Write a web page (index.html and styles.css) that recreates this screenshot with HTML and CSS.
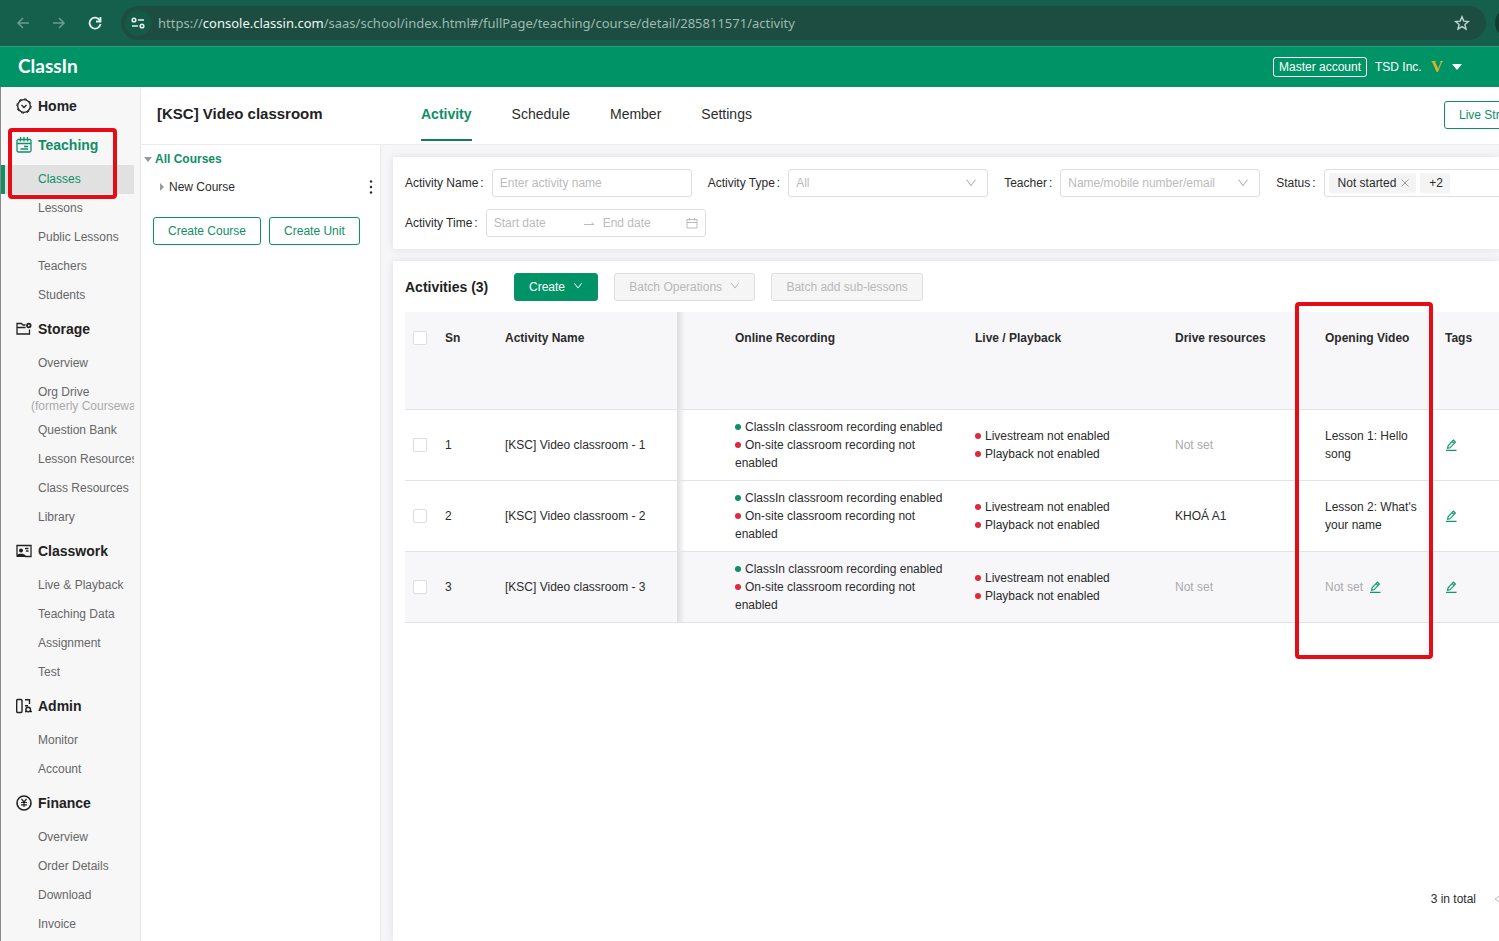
FILE: index.html
```html
<!DOCTYPE html>
<html lang="en">
<head>
    <meta charset="UTF-8">
    <title>ClassIn</title>
    <link rel="stylesheet" href="styles.css">
</head>
<body>
    <svg width="0" height="0" class="sprite" aria-hidden="true">
        <symbol id="edit" viewBox="0 0 12 12">
            <path d="M1 11.3h10.5M2.6 9.3l.5-2.5L8.4 1.2l2 1.9L5 8.8z M7.2 2.6l1.8 1.8" fill="none" stroke="currentColor" stroke-width="1.2"/>
        </symbol>
        <symbol id="down" viewBox="0 0 12 12">
            <path d="M1.5 2.5L6 8.5l4.5-6" fill="none" stroke="currentColor" stroke-width="1.2"/>
        </symbol>
    </svg>

    <div class="browser">
        <button class="nav-btn dim" aria-label="Back">
            <svg width="14" height="14" viewBox="0 0 14 14"><path d="M13 7H2M7 2L2 7l5 5" fill="none" stroke="currentColor" stroke-width="1.5"/></svg>
        </button>
        <button class="nav-btn dim" aria-label="Forward">
            <svg width="14" height="14" viewBox="0 0 14 14"><path d="M1 7h11M7 2l5 5-5 5" fill="none" stroke="currentColor" stroke-width="1.5"/></svg>
        </button>
        <button class="nav-btn" aria-label="Reload">
            <svg width="14" height="14" viewBox="0 0 14 14"><path d="M11.8 4.2A5.5 5.5 0 1 0 12.5 8M12.500 1v4.500H8" fill="none" stroke="currentColor" stroke-width="1.8"/></svg>
        </button>
        <div class="url-bar">
            <span class="site-info">
                <svg width="14" height="12" viewBox="0 0 14 12"><g fill="none" stroke="currentColor" stroke-width="1.6"><circle cx="3" cy="3" r="1.8"/><path d="M7 3h6M1 9h6"/><circle cx="11" cy="9" r="1.8"/></g></svg>
            </span>
            <span class="url">https://<b>console.classin.com</b>/saas/school/index.html#/fullPage/teaching/course/detail/285811571/activity</span>
            <svg class="star" width="16" height="16" viewBox="0 0 16 16"><path d="M8 1.8l1.8 4.3 4.6.4-3.5 3 1.1 4.6L8 11.6l-4 2.5 1.1-4.600-3.500-3 4.600-.4z" fill="none" stroke="currentColor" stroke-width="1.4"/></svg>
        </div>
        <span class="ext"></span>
    </div>

    <header class="app-header">
        <span class="logo">ClassIn</span>
        <span class="badge">Master account</span>
        <span class="org">TSD Inc.</span>
        <span class="vip">V</span>
        <span class="caret"></span>
    </header>

    <div class="layout">
        <nav class="sidebar">
            <h3>
                <svg width="16" height="16" viewBox="0 0 16 16"><g fill="none" stroke="currentColor"><circle cx="8" cy="8" r="6.3" stroke-width="1.3"/><circle cx="8" cy="8" r="7.2" stroke-dasharray="2.8 2.85"/><path d="M5.500 7L8 9.500 10.500 7" stroke-width="1.3"/></g></svg>
                Home
            </h3>

            <div class="group">
                <h3 class="active">
                    <svg width="16" height="16" viewBox="0 0 16 16"><g fill="none" stroke="currentColor" stroke-width="1.3"><rect x="1" y="2.500" width="14" height="12.500" rx="1.500"/><path d="M1 6.500h14M4.500 0v4.500M8 0v4.500M11.500 0v4.500M8 9.500h4M4.500 12h7.500"/></g></svg>
                    Teaching
                </h3>
                <a href="#" class="current">Classes</a>
                <a href="#">Lessons</a>
                <a href="#">Public Lessons</a>
                <a href="#">Teachers</a>
                <a href="#">Students</a>
                <div class="mark mark-menu"></div>
            </div>

            <h3>
                <svg width="16" height="16" viewBox="0 0 16 16"><g fill="none" stroke="currentColor" stroke-width="1.3"><path d="M9.500 4H7L5.500 2.500H1V13h12.500V8.500M1 6.500h8.500"/><circle cx="12.800" cy="4.500" r="1.800" stroke-width="1.800"/></g></svg>
                Storage
            </h3>
            <a href="#">Overview</a>
            <a href="#" class="two-line">Org Drive<small>(formerly Courseware)</small></a>
            <a href="#">Question Bank</a>
            <a href="#">Lesson Resources</a>
            <a href="#">Class Resources</a>
            <a href="#">Library</a>

            <h3>
                <svg width="16" height="16" viewBox="0 0 16 16"><path d="M1 12V2.500h14v11H9M9 5.500h3.500M10 8h2.500" fill="none" stroke="currentColor" stroke-width="1.3"/><circle cx="5" cy="7.500" r="2" fill="currentColor"/><path d="M.5 14v-1.500C1 10 9 10 9.500 12.500V14z" fill="currentColor"/></svg>
                Classwork
            </h3>
            <a href="#">Live &amp; Playback</a>
            <a href="#">Teaching Data</a>
            <a href="#">Assignment</a>
            <a href="#">Test</a>

            <h3>
                <svg width="16" height="16" viewBox="0 0 16 16"><g fill="none" stroke="currentColor" stroke-width="1.4"><rect x=".7" y="1.500" width="5.300" height="13" rx="1"/><path d="M9 1.700h4.500V6M9 7.700h3"/><circle cx="12.200" cy="11.500" r="2.300"/><path d="M9 13.500h1.500M14 13.500h2"/></g></svg>
                Admin
            </h3>
            <a href="#">Monitor</a>
            <a href="#">Account</a>

            <h3>
                <svg width="16" height="16" viewBox="0 0 16 16"><g fill="none" stroke="currentColor"><circle cx="8" cy="8" r="7" stroke-width="1.6"/><path d="M5.500 4L8 7l2.500-3M8 7v5M5 7.500h6M5 9.800h6" stroke-width="1.2"/></g></svg>
                Finance
            </h3>
            <a href="#">Overview</a>
            <a href="#">Order Details</a>
            <a href="#">Download</a>
            <a href="#">Invoice</a>
        </nav>

        <div class="page">
            <div class="page-head">
                <h1>[KSC] Video classroom</h1>
                <div class="tabs">
                    <a href="#" class="on">Activity</a>
                    <a href="#">Schedule</a>
                    <a href="#">Member</a>
                    <a href="#">Settings</a>
                </div>
                <button class="btn live-btn">Live Stream</button>
            </div>

            <div class="columns">
                <aside class="tree">
                    <div class="tree-root"><span class="tri-down"></span>All Courses</div>
                    <div class="tree-item">
                        <span class="tri-right"></span>New Course
                        <svg class="dots" width="4" height="14" viewBox="0 0 4 14"><g fill="currentColor"><circle cx="2" cy="1.500" r="1.200"/><circle cx="2" cy="7" r="1.200"/><circle cx="2" cy="12.500" r="1.200"/></g></svg>
                    </div>
                    <div class="tree-btns">
                        <button class="btn">Create Course</button>
                        <button class="btn">Create Unit</button>
                    </div>
                </aside>

                <main class="content">
                    <section class="card filters">
                        <div class="filter-row">
                            <div class="field">
                                <label for="activityName">Activity Name<i>:</i></label>
                                <input type="text" id="activityName" placeholder="Enter activity name">
                            </div>
                            <div class="field">
                                <label for="activityType">Activity Type<i>:</i></label>
                                <div class="select">
                                    <select id="activityType"><option>All</option></select>
                                    <svg width="12" height="12"><use href="#down"/></svg>
                                </div>
                            </div>
                            <div class="field">
                                <label for="teacher">Teacher<i>:</i></label>
                                <div class="select">
                                    <select id="teacher"><option>Name/mobile number/email</option></select>
                                    <svg width="12" height="12"><use href="#down"/></svg>
                                </div>
                            </div>
                            <div class="field">
                                <span class="label">Status<i>:</i></span>
                                <div class="tag-box">
                                    <span class="tag">Not started<button aria-label="Remove"><svg width="8" height="8" viewBox="0 0 8 8"><path d="M.5.5l7 7M7.500.5l-7 7" stroke="currentColor"/></svg></button></span>
                                    <span class="tag">+2</span>
                                </div>
                            </div>
                        </div>
                        <div class="filter-row">
                            <div class="field">
                                <label for="startDate">Activity Time<i>:</i></label>
                                <div class="range">
                                    <input type="text" id="startDate" class="start" placeholder="Start date">
                                    <svg width="11" height="12" viewBox="0 0 11 12"><path d="M0 7.500h10L7.500 5" fill="none" stroke="currentColor"/></svg>
                                    <input type="text" id="endDate" placeholder="End date" aria-label="End date">
                                    <svg width="12" height="12" viewBox="0 0 12 12"><path d="M1 2.500h10v8.500H1zM1 5.500h10M3.500 1v2.500M8.500 1v2.500" fill="none" stroke="currentColor"/></svg>
                                </div>
                            </div>
                        </div>
                    </section>

                    <section class="card list">
                        <div class="toolbar">
                            <h2>Activities (3)</h2>
                            <button class="btn primary">Create <svg width="10" height="10"><use href="#down"/></svg></button>
                            <button class="btn" disabled>Batch Operations <svg width="10" height="10"><use href="#down"/></svg></button>
                            <button class="btn" disabled>Batch add sub-lessons</button>
                        </div>

                        <table>
                            <colgroup>
                                <col class="c-check">
                                <col class="c-sn">
                                <col class="c-name">
                                <col class="c-rec">
                                <col class="c-live">
                                <col class="c-drive">
                                <col class="c-video">
                                <col class="c-tags">
                            </colgroup>
                            <thead>
                                <tr>
                                    <th><input type="checkbox" aria-label="Select all"></th>
                                    <th>Sn</th>
                                    <th>Activity Name</th>
                                    <th class="rec">Online Recording</th>
                                    <th>Live / Playback</th>
                                    <th>Drive resources</th>
                                    <th class="video">Opening Video<div class="mark mark-col"></div></th>
                                    <th>Tags</th>
                                </tr>
                            </thead>
                            <tbody>
                                <tr>
                                    <td><input type="checkbox" aria-label="Select 1"></td>
                                    <td>1</td>
                                    <td>[KSC] Video classroom - 1</td>
                                    <td class="rec"><span class="dot green"></span>ClassIn classroom recording enabled<br><span class="dot"></span>On-site classroom recording not enabled</td>
                                    <td><span class="dot"></span>Livestream not enabled<br><span class="dot"></span>Playback not enabled</td>
                                    <td><span class="muted">Not set</span></td>
                                    <td>Lesson 1: Hello song</td>
                                    <td><button class="edit" aria-label="Edit tags"><svg width="12" height="12"><use href="#edit"/></svg></button></td>
                                </tr>
                                <tr>
                                    <td><input type="checkbox" aria-label="Select 2"></td>
                                    <td>2</td>
                                    <td>[KSC] Video classroom - 2</td>
                                    <td class="rec"><span class="dot green"></span>ClassIn classroom recording enabled<br><span class="dot"></span>On-site classroom recording not enabled</td>
                                    <td><span class="dot"></span>Livestream not enabled<br><span class="dot"></span>Playback not enabled</td>
                                    <td>KHOÁ A1</td>
                                    <td>Lesson 2: What's your name</td>
                                    <td><button class="edit" aria-label="Edit tags"><svg width="12" height="12"><use href="#edit"/></svg></button></td>
                                </tr>
                                <tr class="hover">
                                    <td><input type="checkbox" aria-label="Select 3"></td>
                                    <td>3</td>
                                    <td>[KSC] Video classroom - 3</td>
                                    <td class="rec"><span class="dot green"></span>ClassIn classroom recording enabled<br><span class="dot"></span>On-site classroom recording not enabled</td>
                                    <td><span class="dot"></span>Livestream not enabled<br><span class="dot"></span>Playback not enabled</td>
                                    <td><span class="muted">Not set</span></td>
                                    <td><span class="muted">Not set</span> <button class="edit" aria-label="Edit opening video"><svg width="12" height="12"><use href="#edit"/></svg></button></td>
                                    <td><button class="edit" aria-label="Edit tags"><svg width="12" height="12"><use href="#edit"/></svg></button></td>
                                </tr>
                            </tbody>
                        </table>

                        <div class="pager">
                            <span>3 in total</span>
                            <button aria-label="Previous page"><svg width="8" height="10" viewBox="0 0 8 10"><path d="M7 1L1 5l6 4" fill="none" stroke="currentColor"/></svg></button>
                        </div>
                    </section>
                </main>
            </div>
        </div>
    </div>
</body>
</html>
```
FILE: styles.css
```css
* {
    box-sizing: border-box;
}
body {
    margin: 0;
    height: 100vh;
    display: flex;
    flex-direction: column;
    overflow: hidden;
    font-family: "Liberation Sans", Arial, sans-serif;
    font-size: 12px;
    line-height: 18px;
    color: #2b2b2b;
    background-color: #fff;
}
h1, h2, h3 {
    margin: 0;
}
a {
    color: inherit;
    text-decoration: none;
}
button, input, select {
    font: inherit;
    color: inherit;
}
button {
    padding: 0;
    border: none;
    background: none;
    cursor: pointer;
}
i {
    font-style: normal;
    margin-left: 2px;
}
.sprite {
    position: absolute;
}

/* browser bar */
.browser {
    flex: none;
    display: flex;
    align-items: center;
    height: 46px;
    padding-left: 16px;
    background-color: #15604d;
    color: #e3f1ec;
    overflow: hidden;
}
.nav-btn {
    display: flex;
    margin-right: 22px;
}
.nav-btn.dim {
    color: #6a9c8e;
}
.url-bar {
    flex: 1;
    display: flex;
    align-items: center;
    height: 34px;
    margin-right: 9px;
    padding: 0 16px 0 4px;
    border-radius: 17px;
    background-color: #1c4d40;
}
.nav-btn + .url-bar {
    margin-left: -3px;
}
.site-info {
    display: flex;
    align-items: center;
    justify-content: center;
    width: 26px;
    height: 26px;
    margin-right: 7px;
    border-radius: 50%;
    background-color: #175947;
}
.url {
    flex: 1;
    font-family: "Noto Sans", sans-serif;
    font-size: 13px;
    color: #9dbab1;
    white-space: nowrap;
}
.url b {
    font-weight: normal;
    color: #eef8f5;
}
.star {
    color: #c3d6d0;
}
.ext {
    flex: none;
    width: 30px;
    height: 30px;
    margin-right: -26px;
    border-radius: 50%;
    background-color: #123d32;
}

/* green header */
.app-header {
    flex: none;
    display: flex;
    align-items: center;
    height: 41px;
    padding: 0 37px 0 18px;
    border-top: 1px solid #3a9a7c;
    background-color: #009366;
    color: #fff;
}
.logo {
    flex: 1;
    padding-bottom: 2px;
    font-family: Lato, sans-serif;
    font-size: 19px;
    font-weight: bold;
}
.badge {
    margin-right: 8px;
    padding: 0 5px;
    border: 1px solid #fff;
    border-radius: 3px;
}
.org {
    margin-right: 9px;
}
.vip {
    margin-right: 9px;
    font-family: "Liberation Serif", serif;
    font-size: 17px;
    font-weight: bold;
    color: #d9b429;
}
.caret {
    border: 5px solid transparent;
    border-top: 6px solid #fff;
    border-bottom: none;
}

.layout {
    flex: 1;
    display: flex;
    min-height: 0;
}

/* left menu */
.sidebar {
    flex: none;
    width: 141px;
    border-left: 1px solid #8a8a8a;
    border-right: 1px solid #e6e6e6;
    background-color: #f7f7f8;
    color: #666;
}
.sidebar h3 {
    display: flex;
    align-items: center;
    gap: 6px;
    height: 39px;
    padding: 0 0 2px 15px;
    font-size: 14px;
    color: #222;
}
.sidebar h3.active {
    color: #0f8f66;
}
.sidebar a {
    display: block;
    height: 29px;
    margin-right: 6px;
    padding-left: 37px;
    line-height: 29px;
    white-space: nowrap;
    overflow: hidden;
}
.sidebar a.current {
    padding-left: 33px;
    border-left: 4px solid #0f8f66;
    background-color: #e1e1e1;
    color: #0f8f66;
}
.sidebar a.two-line {
    height: 38px;
    padding-top: 7px;
    line-height: 14px;
}
.two-line small {
    display: block;
    margin-left: -7px;
    font-size: 12px;
    color: #aaa;
}
.group {
    position: relative;
}

/* red highlight frames */
.mark {
    position: absolute;
    z-index: 2;
    border: 4px solid #e60c16;
    border-radius: 4px;
    pointer-events: none;
}
.mark-menu {
    top: 2px;
    left: 7px;
    width: 109px;
    height: 71px;
}
.mark-col {
    top: -10px;
    left: -22px;
    width: 138px;
    height: 357px;
}

/* page */
.page {
    flex: 1;
    display: flex;
    flex-direction: column;
    min-width: 0;
}
.page-head {
    flex: none;
    display: flex;
    height: 58px;
    padding-left: 16px;
    border-bottom: 1px solid #ebebef;
    overflow: hidden;
}
.page-head h1 {
    width: 264px;
    font-size: 15px;
    line-height: 54px;
    color: #222;
}
.tabs {
    display: flex;
    gap: 40px;
    font-size: 14px;
    line-height: 54px;
}
.tabs a {
    height: 54px;
}
.tabs .on {
    font-weight: bold;
    color: #0f8f66;
    border-bottom: 2px solid #0f7d5c;
}
.btn {
    height: 28px;
    padding: 0 14px;
    border: 1px solid #0f8f66;
    border-radius: 3px;
    color: #0f8f66;
    background-color: #fff;
    white-space: nowrap;
}
.btn svg {
    margin-left: 5px;
}
.btn.primary {
    color: #fff;
    background-color: #009366;
}
.btn:disabled {
    border-color: #dedede;
    color: #b8b8b8;
    background-color: #f5f5f5;
}
.live-btn {
    flex: none;
    width: 93px;
    margin: 14px -38px 0 auto;
}
.columns {
    flex: 1;
    display: flex;
    min-height: 0;
}

/* course tree */
.tree {
    flex: none;
    width: 240px;
    padding: 5px 7px 0 4px;
    border-right: 1px solid #ebebef;
}
.tree-root, .tree-item {
    display: flex;
    align-items: center;
}
.tree-root {
    gap: 3px;
    font-weight: bold;
    color: #0f8f66;
}
.tree-item {
    gap: 5px;
    margin-top: 10px;
    padding-left: 15px;
}
.tri-down {
    border: 4px solid transparent;
    border-top: 5px solid #999;
    border-bottom: none;
    margin-left: -1px;
}
.tri-right {
    border: 4px solid transparent;
    border-left: 4px solid #999;
    border-right: none;
}
.dots {
    margin-left: auto;
}
.tree-btns {
    display: flex;
    gap: 8px;
    margin-top: 21px;
    padding-left: 8px;
}

/* main area */
.content {
    flex: 1;
    display: flex;
    flex-direction: column;
    gap: 12px;
    min-width: 0;
    padding: 12px 0 0 12px;
    background-color: #f6f6f9;
    overflow: hidden;
}
.card {
    padding: 12px;
    background-color: #fff;
    box-shadow: 0 0 8px rgba(0, 0, 0, 0.1);
}
.filters {
    display: flex;
    flex-direction: column;
    gap: 12px;
}
.filter-row {
    display: flex;
    gap: 16px;
}
.field {
    flex: none;
    display: flex;
    align-items: center;
    gap: 8px;
}
.field input, .field select {
    width: 200px;
    height: 28px;
    padding: 0 7px;
    border: 1px solid #dedede;
    border-radius: 3px;
    background-color: #fff;
    outline: none;
}
.field select {
    appearance: none;
    color: #bbb;
}
input::placeholder {
    color: #bbb;
}
.select {
    position: relative;
}
.select svg {
    position: absolute;
    top: 8px;
    right: 11px;
    color: #bbb;
    pointer-events: none;
}
.tag-box {
    display: flex;
    align-items: center;
    gap: 4px;
    width: 200px;
    height: 28px;
    padding: 0 4px;
    border: 1px solid #dedede;
    border-radius: 3px;
}
.tag {
    display: flex;
    align-items: center;
    gap: 5px;
    height: 20px;
    padding: 0 7px 0 9px;
    border-radius: 2px;
    background-color: #f4f4f4;
}
.tag button {
    display: flex;
    color: #999;
}
.range {
    display: flex;
    align-items: center;
    width: 220px;
    height: 28px;
    padding: 0 7px;
    border: 1px solid #dedede;
    border-radius: 3px;
    color: #bbb;
}
.field .range input {
    flex: 1;
    width: 0;
    height: 24px;
    padding: 0;
    border: none;
}
.field .range .start {
    flex: none;
    width: 90px;
}
.range svg {
    flex: none;
    margin-right: 8px;
}
.range svg:last-child {
    margin-right: 0;
}

/* activity list */
.list {
    flex: 1;
    display: flex;
    flex-direction: column;
}
.toolbar {
    display: flex;
    align-items: center;
    gap: 16px;
    margin-bottom: 11px;
}
.toolbar h2 {
    width: 93px;
    font-size: 14px;
    color: #222;
}
table {
    table-layout: fixed;
    width: 1132px;
    border-collapse: separate;
    border-spacing: 0;
}
th, td {
    padding: 8px;
    border-bottom: 1px solid #e4e4e4;
    text-align: left;
}
th {
    height: 98px;
    padding-top: 17px;
    vertical-align: top;
    background-color: #f7f7fa;
}
.hover td {
    background-color: #f7f7fa;
}
th.rec, td.rec {
    padding-left: 58px;
    background-image: linear-gradient(to right, #dedede, rgba(230, 230, 230, 0));
    background-size: 8px 100%;
    background-repeat: no-repeat;
}
.video {
    position: relative;
}
.c-check { width: 32px; }
.c-sn { width: 60px; }
.c-name { width: 180px; }
.c-rec { width: 290px; }
.c-live { width: 200px; }
.c-drive { width: 150px; }
.c-video { width: 120px; }
.c-tags { width: 100px; }

input[type="checkbox"] {
    appearance: none;
    display: block;
    width: 14px;
    height: 14px;
    margin: 2px 0;
    border: 1px solid #dedede;
    border-radius: 2px;
    background-color: #fff;
}
.dot {
    display: inline-block;
    width: 6px;
    height: 6px;
    margin-right: 4px;
    border-radius: 50%;
    background-color: #e0283c;
    vertical-align: 1px;
}
.dot.green {
    background-color: #0f8f66;
}
.muted {
    color: #aaa;
}
.edit {
    color: #0f9a6c;
    vertical-align: -2px;
}
.muted + .edit {
    margin-left: 3px;
}
.edit svg {
    display: block;
}
.pager {
    display: flex;
    align-items: center;
    justify-content: flex-end;
    gap: 18px;
    height: 28px;
    margin: auto -15px 16px 0;
}
.pager button {
    display: flex;
    color: #bbb;
}
```
